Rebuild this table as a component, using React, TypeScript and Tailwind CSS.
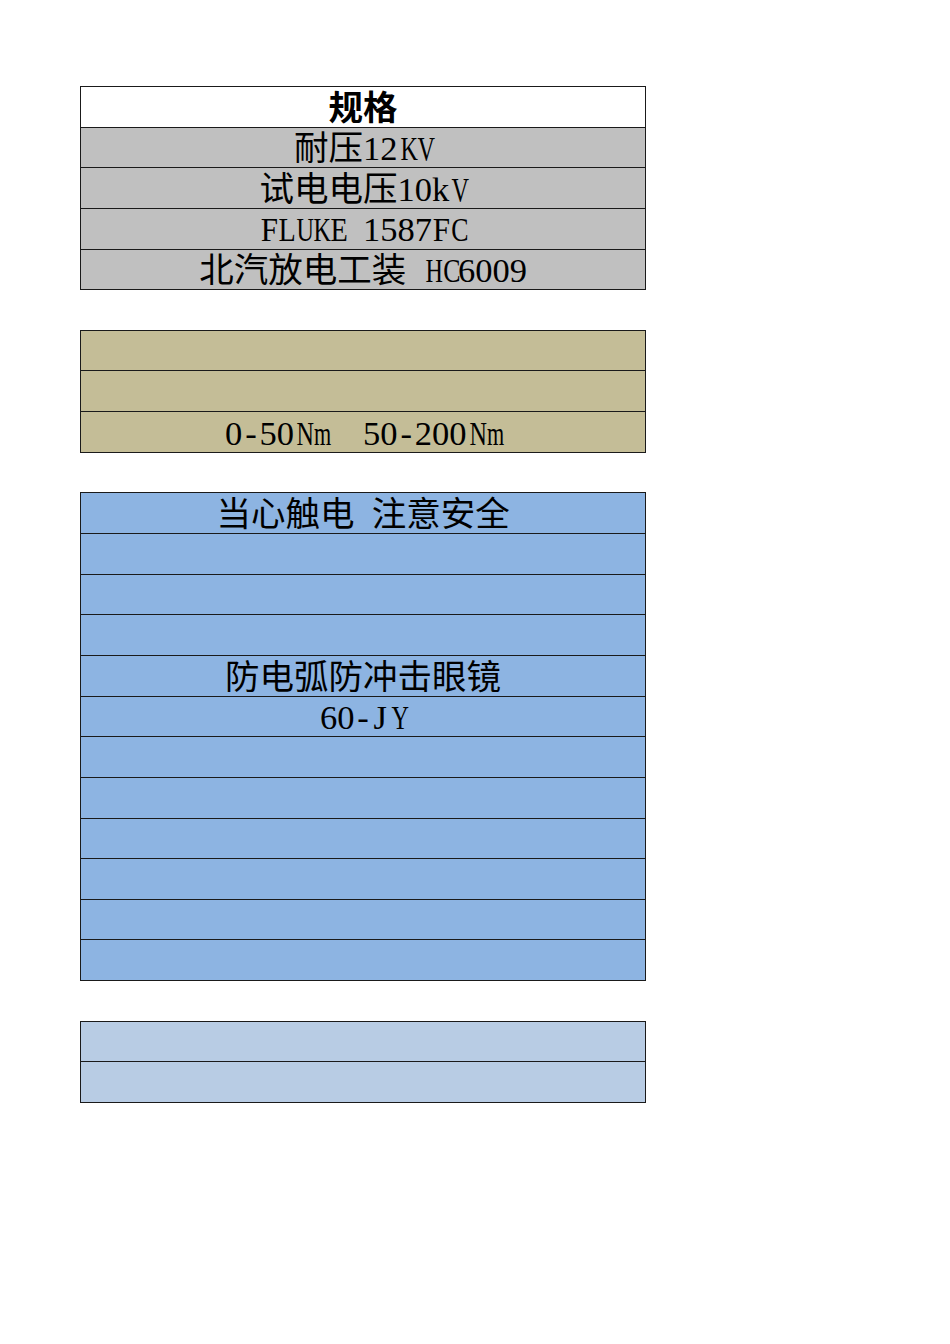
const fontStack = "font-['Liberation_Serif','Noto_Sans_CJK_SC',serif]";

type Block = { bg: string; rows: string[]; header?: string };

const blocks: Block[] = [
  { bg: 'bg-[#c0c0c0]', header: '规格', rows: ['耐压12KV', '试电电压10kV', 'FLUKE 1587FC', '北汽放电工装 HC6009'] },
  { bg: 'bg-[#c4bd97]', rows: ['', '', '0-50Nm  50-200Nm'] },
  {
    bg: 'bg-[#8db4e2]',
    rows: ['当心触电 注意安全', '', '', '', '防电弧防冲击眼镜', '60-JY', '', '', '', '', '', ''],
  },
  { bg: 'bg-[#b8cce4]', rows: ['', ''] },
];

// latin glyphs wider than half an em get squeezed into their half-width cell
const squeeze: Record<string, string> = {
  F: 'scale-x-[0.9]',
  L: 'scale-x-[0.82]',
  E: 'scale-x-[0.82]',
  C: 'scale-x-[0.75]',
  U: 'scale-x-[0.7]',
  K: 'scale-x-[0.7]',
  V: 'scale-x-[0.7]',
  N: 'scale-x-[0.7]',
  H: 'scale-x-[0.7]',
  Y: 'scale-x-[0.7]',
  m: 'scale-x-[0.64]',
};

// SimSun-like metrics: latin chars and spaces take half an em, CJK a full em
function Cell({ text }: { text: string }) {
  return (
    <>
      {Array.from(text).map((ch, i) =>
        /[\u3000-\u9fff]/.test(ch) ? (
          <span key={i} className="inline-block w-[1em] text-center">
            {ch}
          </span>
        ) : (
          <span key={i} className={`inline-block w-[0.5em] text-center ${squeeze[ch] ?? ''}`}>
            {ch === ' ' ? '\u00a0' : ch}
          </span>
        ),
      )}
    </>
  );
}

function Row({ text, bg, bold }: { text: string; bg: string; bold?: boolean }) {
  return (
    <div
      className={`h-[40.65px] flex items-center justify-center border-b border-[#1a1a1a] ${bg} text-[34.5px] leading-none text-black whitespace-nowrap pt-[2px] ${bold ? 'font-bold' : 'font-normal'}`}
    >
      <Cell text={text} />
    </div>
  );
}

export default function App() {
  return (
    <div className={`w-[950px] h-[1344px] bg-white pt-[86px] pl-[80px] ${fontStack}`}>
      <div className="w-[566px] flex flex-col gap-[39.65px]">
        {blocks.map((b, i) => (
          <div key={i} className="border-t border-x border-[#1a1a1a]">
            {b.header && <Row text={b.header} bg="bg-white" bold />}
            {b.rows.map((r, j) => (
              <Row key={j} text={r} bg={b.bg} />
            ))}
          </div>
        ))}
      </div>
    </div>
  );
}
